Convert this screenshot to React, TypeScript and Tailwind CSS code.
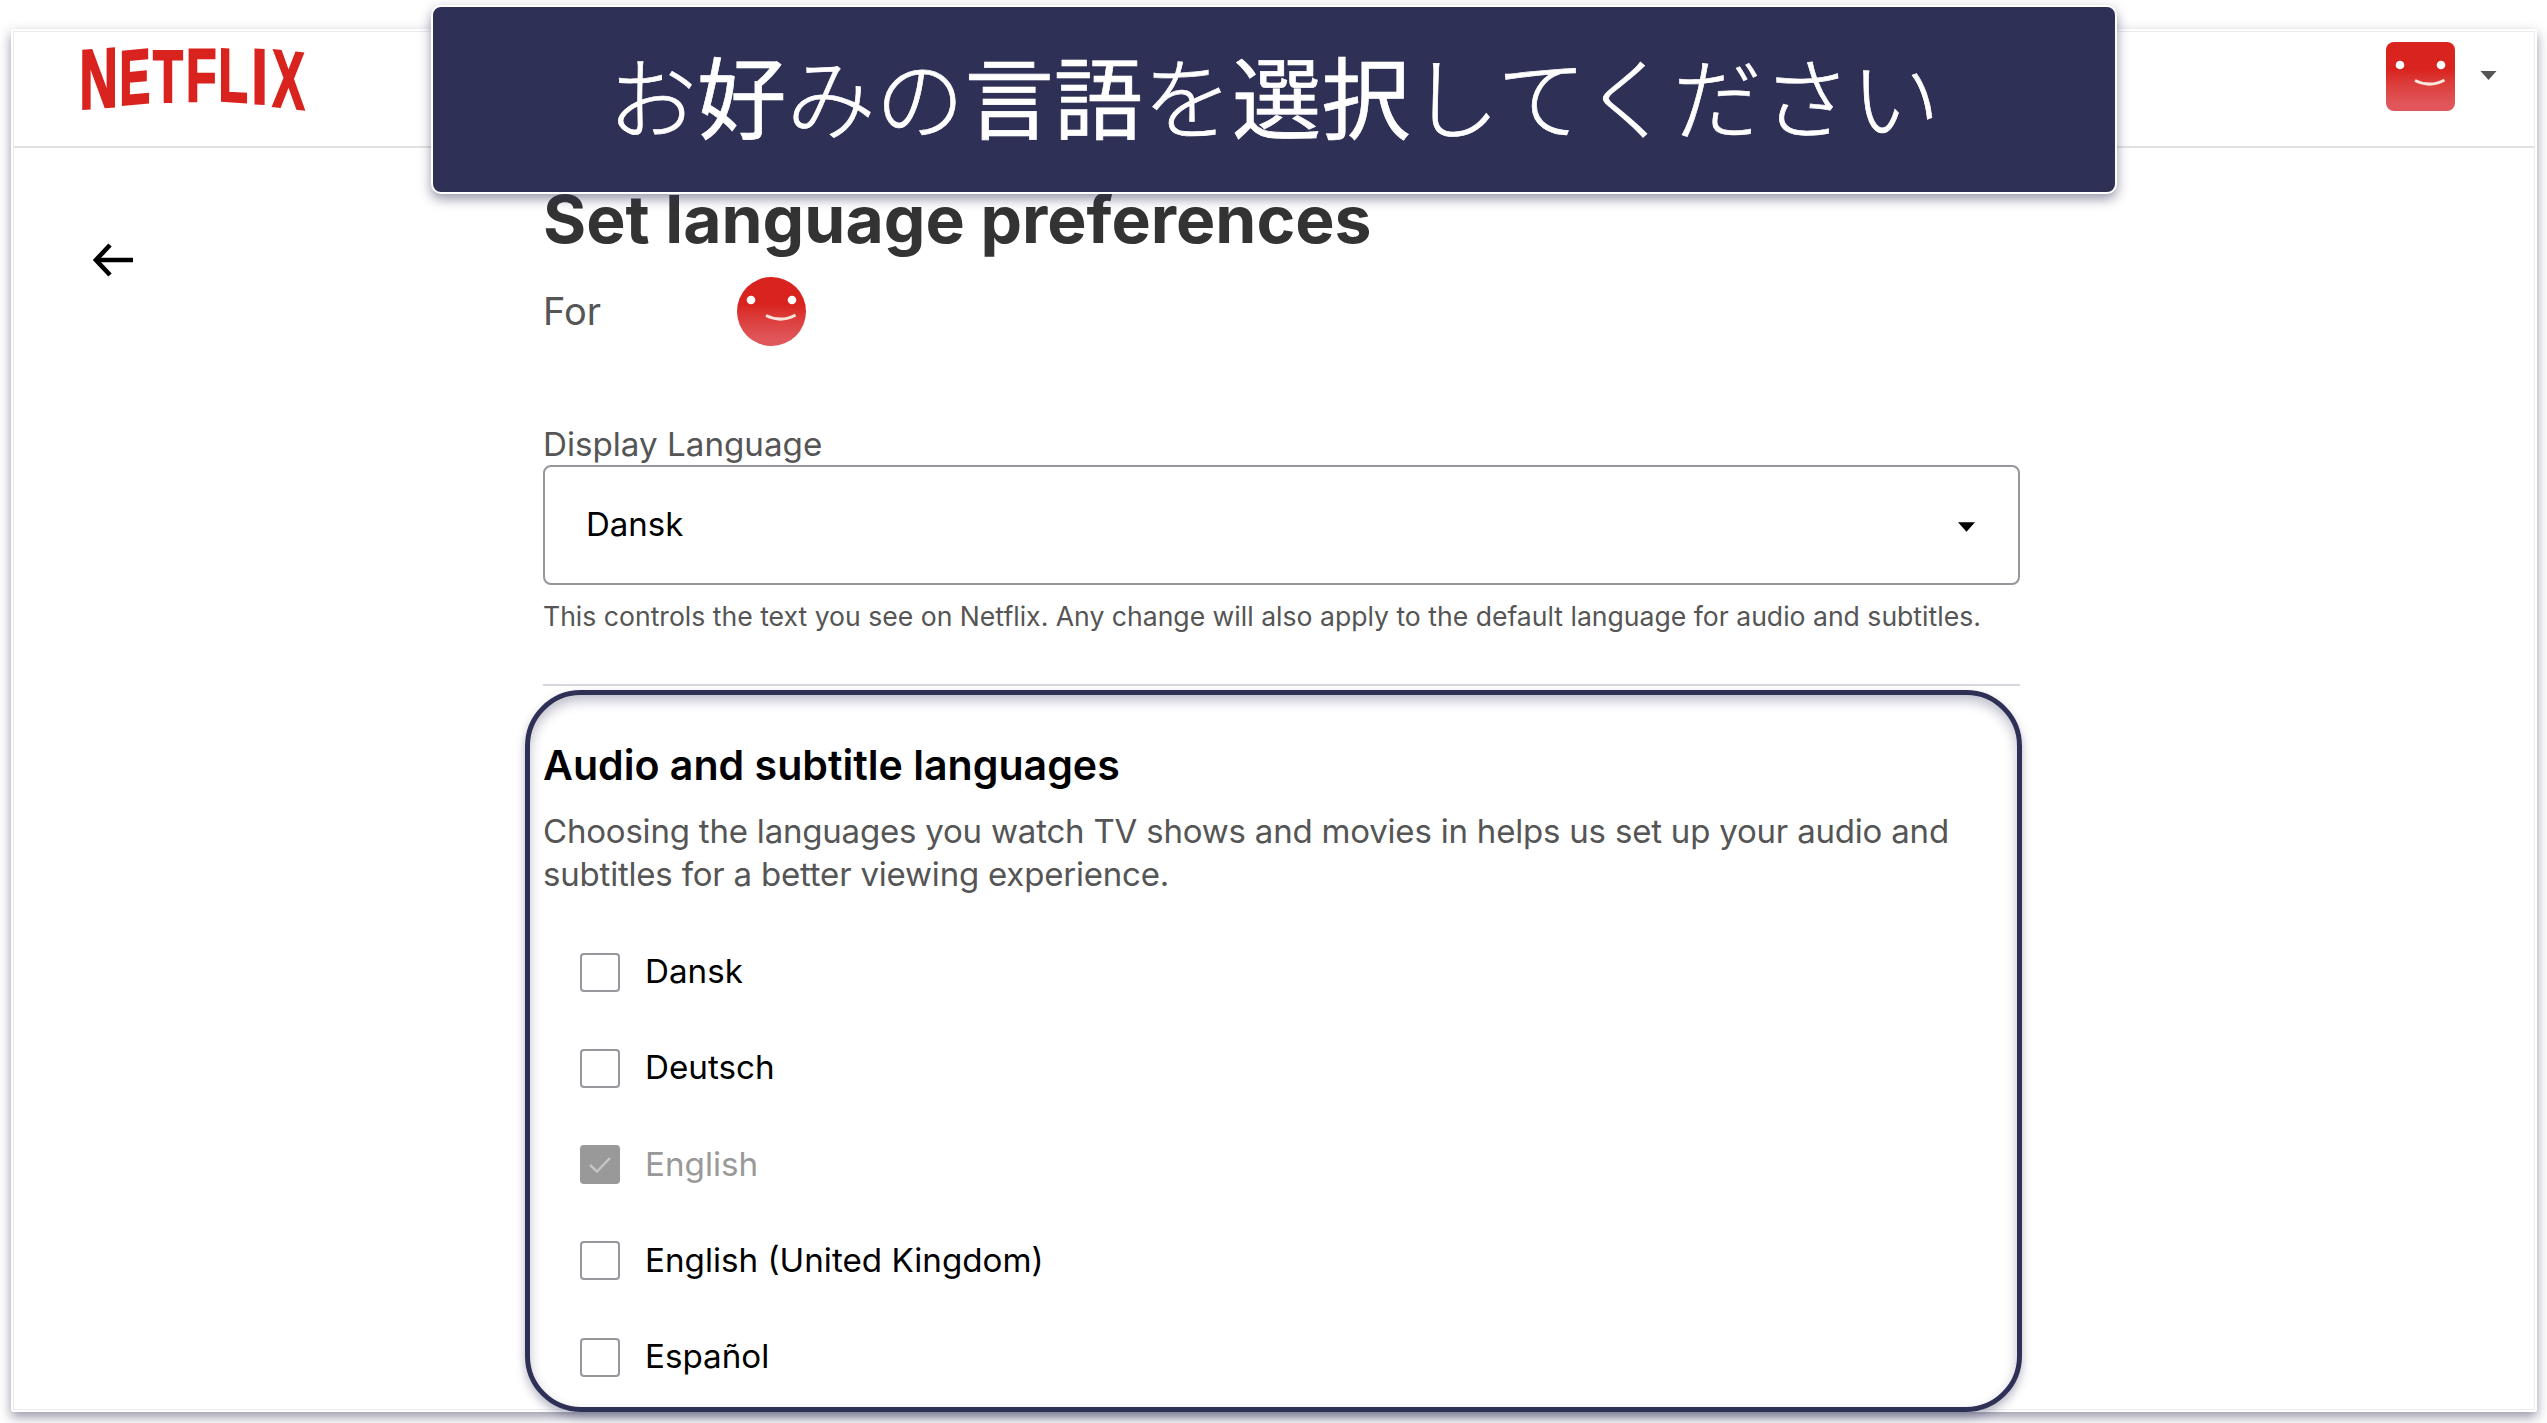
import { useState } from 'react';

const languages = [
  { name: 'Dansk' },
  { name: 'Deutsch' },
  { name: 'English', locked: true },
  { name: 'English (United Kingdom)' },
  { name: 'Español' },
];

// each letter is stretched on its own so the bottom edge follows the arch
const logoLetters = [
  { char: 'N', transform: 'matrix(0.53 -0.04 0 0.84 -2.5 60)' },
  { char: 'E', transform: 'matrix(0.46 -0.04 0 0.77 37.5 56)' },
  { char: 'T', transform: 'matrix(0.49 0 0 0.75 71 52.6)' },
  { char: 'F', transform: 'matrix(0.5 0 0 0.75 104 52.2)' },
  { char: 'L', transform: 'matrix(0.48 0.03 0 0.75 136.500 51.4)' },
  { char: 'I', transform: 'matrix(0.58 0.03 0 0.78 169.5 54.3)' },
  { char: 'X', transform: 'matrix(0.48 0.05 0 0.81 190.5 57)' },
];

function Logo() {
  return (
    <svg className="w-[226px] h-[62px] overflow-visible" viewBox="0 0 226 62" aria-label="Netflix">
      {logoLetters.map((letter) => (
        <text
          key={letter.char}
          transform={letter.transform}
          fill="#d9231e"
          stroke="#d9231e"
          strokeWidth="3"
          className="font-['Liberation_Sans',sans-serif] text-[100px] font-bold"
        >
          {letter.char}
        </text>
      ))}
    </svg>
  );
}

function Avatar({ className }: { className: string }) {
  return (
    <div className={`w-[69px] h-[69px] overflow-hidden bg-linear-to-b from-[#d9231e] from-40% to-[#e0565a] to-90% ${className}`}>
      <svg viewBox="0 0 69 69" className="w-full h-full">
        <circle cx="14" cy="23" r="4.3" fill="#fff" />
        <circle cx="55" cy="23" r="4.3" fill="#fff" />
        <path d="M29 38.5 Q44 46 58.5 38" fill="none" stroke="#f8e6dc" strokeWidth="3" />
      </svg>
    </div>
  );
}

function Caret({ className }: { className: string }) {
  return (
    <svg viewBox="0 0 16 9" className={className}>
      <path d="M0 0h16L8 9z" fill="currentColor" />
    </svg>
  );
}

export default function App() {
  const [selected, setSelected] = useState<string[]>(['English']);

  const toggle = (name: string) => {
    setSelected(selected.includes(name) ? selected.filter((n) => n !== name) : [...selected, name]);
  };

  return (
    <div className="relative w-[2547px] h-[1423px] overflow-hidden bg-white pt-[29px] pl-[11px] font-['Inter',sans-serif]">
      <div className="w-[2526px] h-[1383px] bg-white border-2 border-white rounded-xs shadow-[0_5px_12px_rgba(47,48,86,0.5)]">
        <div className="h-full border border-[#ececef]">
          <header className="flex h-[116px] justify-between border-b-2 border-[#e2e2e6] pl-[68px] pr-[37px]">
            <div className="pt-[17px]">
              <Logo />
            </div>
            <div className="flex items-start pt-[10px]">
              <Avatar className="rounded-[8px]" />
              <Caret className="ml-[25px] mt-[29px] h-[9px] w-[17px] text-[#555]" />
            </div>
          </header>

          <div className="flex">
            <div className="w-[529px] pt-[95px] pl-[79px]">
              <svg viewBox="0 0 40 34" className="h-[34px] w-[40px]" fill="none" stroke="#000" strokeWidth="4.6">
                <path d="M17 2 L3 17 L17 32" />
                <path d="M3 17 H40" />
              </svg>
            </div>

            <main className="w-[1477px] pt-[33px] text-[#555]">
              <h1 className="h-[76px] whitespace-nowrap text-[66px] leading-[76px] font-bold text-[#333]">
                Set language preferences
              </h1>
              <div className="mt-[20px] flex h-[68px] items-center">
                <span className="w-[194px] text-[38px] leading-none">For</span>
                <Avatar className="rounded-full" />
              </div>

              <label className="mt-[78px] block h-[42px] text-[33.2px] leading-[42px]">Display Language</label>
              <button className="flex h-[120px] w-full items-center justify-between rounded-[8px] border-2 border-[#96969c] pl-[41px] pr-[43px] text-[33px] text-black">
                <span>Dansk</span>
                <Caret className="mt-[4px] h-[10px] w-[17px]" />
              </button>
              <p className="mt-[13px] h-[36px] whitespace-nowrap text-[26.58px] leading-[36px]">
                This controls the text you see on Netflix. Any change will also apply to the default language for audio and subtitles.
              </p>
              <div className="mt-[50px] border-t-2 border-[#d6d6de]" />

              <section className="mt-[4px] -ml-[18px] h-[722px] w-[1497px] rounded-[56px] border-[5px] border-[#2f3056] pl-[13px] shadow-[0_5px_10px_rgba(47,48,86,0.35),inset_0_6px_12px_rgba(47,48,86,0.3)]">
                <h2 className="mt-[45px] h-[50px] whitespace-nowrap text-[41.1px] leading-[50px] font-semibold text-black">
                  Audio and subtitle languages
                </h2>
                <p className="mt-[20px] whitespace-nowrap text-[33px] leading-[43px] tracking-[-0.2px]">
                  Choosing the languages you watch TV shows and movies in helps us set up your audio and
                  <br />
                  subtitles for a better viewing experience.
                </p>
                <div className="mt-[28px] pl-[37px]">
                  {languages.map((lang) => (
                    <div
                      key={lang.name}
                      onClick={() => !lang.locked && toggle(lang.name)}
                      className="flex h-[96.25px] items-center gap-[25px]"
                    >
                      {selected.includes(lang.name) ? (
                        <span className="flex h-[39px] w-[40px] items-center justify-center rounded-[4px] bg-[#999]">
                          <svg viewBox="0 0 22 16" className="h-[16px] w-[22px]" fill="none" stroke="#c6c6ca" strokeWidth="2.4">
                            <path d="M1 8 L8 14.500 L21 1" />
                          </svg>
                        </span>
                      ) : (
                        <span className="h-[39px] w-[40px] rounded-[4px] border-2 border-[#96969c]" />
                      )}
                      <span className={`text-[33.2px] whitespace-nowrap ${lang.locked ? 'text-[#999]' : 'text-black'}`}>
                        {lang.name}
                      </span>
                    </div>
                  ))}
                </div>
              </section>
            </main>
          </div>
        </div>
      </div>

      <div className="absolute left-[431px] top-[5px] flex h-[189px] w-[1686px] items-center justify-center rounded-[10px] border-2 border-white bg-[#2f3056] shadow-[0_5px_12px_rgba(47,48,86,0.5)]">
        <p
          lang="ja"
          className="pb-[12px] whitespace-nowrap font-['Noto_Sans_CJK_JP',sans-serif] text-[89.2px] leading-none font-light text-white [-webkit-text-stroke:0.7px_white]"
        >
          お<span className="font-normal">好</span>みの<span className="font-normal">言語</span>を
          <span className="font-normal">選択</span>してください
        </p>
      </div>
    </div>
  );
}
